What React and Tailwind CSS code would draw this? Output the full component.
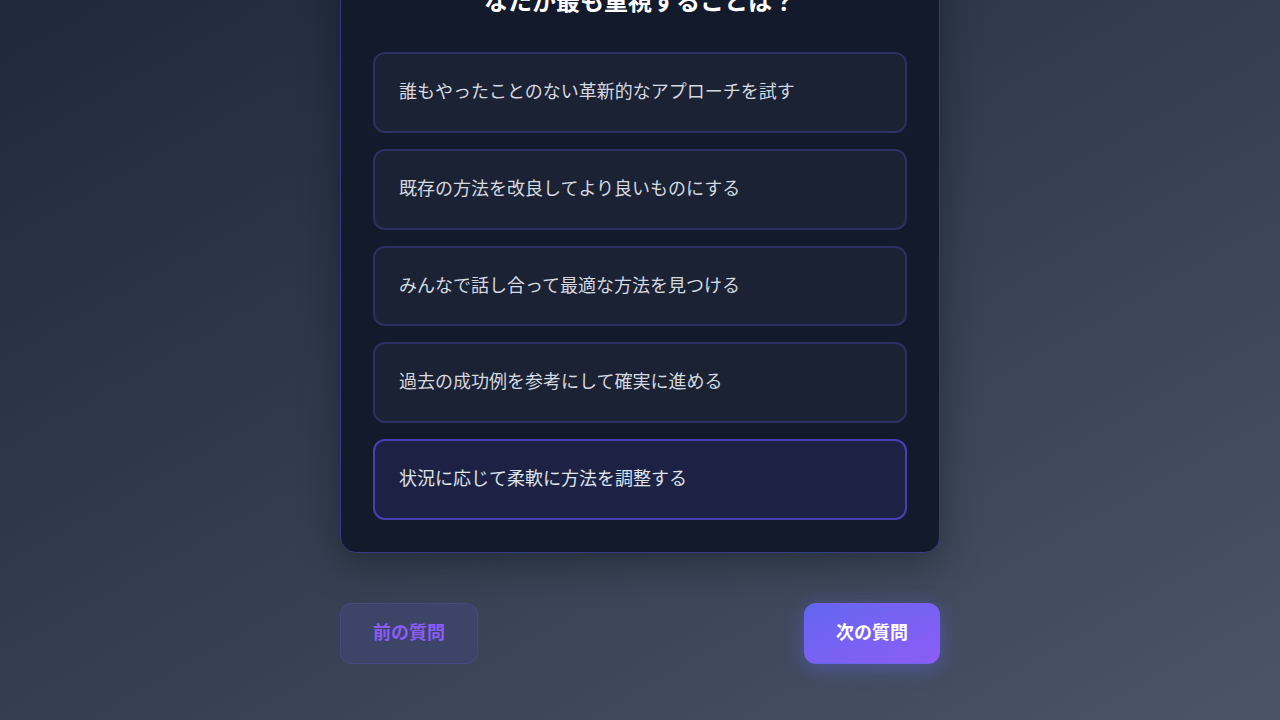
import React, { useState } from "react";

const OPTIONS = [
  "誰もやったことのない革新的なアプローチを試す",
  "既存の方法を改良してより良いものにする",
  "みんなで話し合って最適な方法を見つける",
  "過去の成功例を参考にして確実に進める",
  "状況に応じて柔軟に方法を調整する",
];

export default function App() {
  const [selected, setSelected] = useState(4);

  return (
    <div className="min-h-screen w-full overflow-hidden bg-gradient-to-br from-[#1e293b] to-[#4a5568] font-['Noto_Sans_CJK_JP','Noto_Sans',sans-serif]">
      <div className="mx-auto w-[600px] -mt-[87px] pb-10">
        {/* QUESTION CARD */}
        <div className="rounded-2xl border border-[#363b86] bg-[#131a2c] p-8 shadow-[0_10px_40px_rgba(0,0,0,0.35)]">
          <h2 className="mb-[34px] text-center text-[24px] font-bold leading-[36px] text-white">
            チームで新しいプロジェクトに取り組むとき、あ
            <br />
            なたが最も重視することは？
          </h2>

          <div className="flex flex-col gap-4">
            {OPTIONS.map((opt, i) => {
              const isActive = selected === i;
              return (
                <button
                  key={opt}
                  onClick={() => setSelected(i)}
                  className={`w-full rounded-xl border-2 px-6 pt-[22px] pb-[26px] text-left text-[18px] leading-[1.6] transition-all ${
                    isActive
                      ? "border-[#4540b5] bg-[#1d2244] text-[#dfe3ea]"
                      : "border-[#2b3160] bg-[#1b2233] text-[#d5d9e0]"
                  }`}
                >
                  {opt}
                </button>
              );
            })}
          </div>
        </div>

        {/* NAV BUTTONS */}
        <div className="mt-[50px] flex items-center justify-between">
          <button className="rounded-xl border border-[#4a4f9a]/60 bg-[#3c4467] px-8 pt-[14px] pb-[18px] text-[18px] font-bold leading-[1.5] text-[#8b5cf6]">
            前の質問
          </button>
          <button className="rounded-xl border-y border-transparent bg-gradient-to-br from-[#6366f1] to-[#8b5cf6] px-8 pt-[14px] pb-[18px] text-[18px] font-bold leading-[1.5] text-white shadow-[0_4px_20px_rgba(99,102,241,0.45)]">
            次の質問
          </button>
        </div>
      </div>
    </div>
  );
}
